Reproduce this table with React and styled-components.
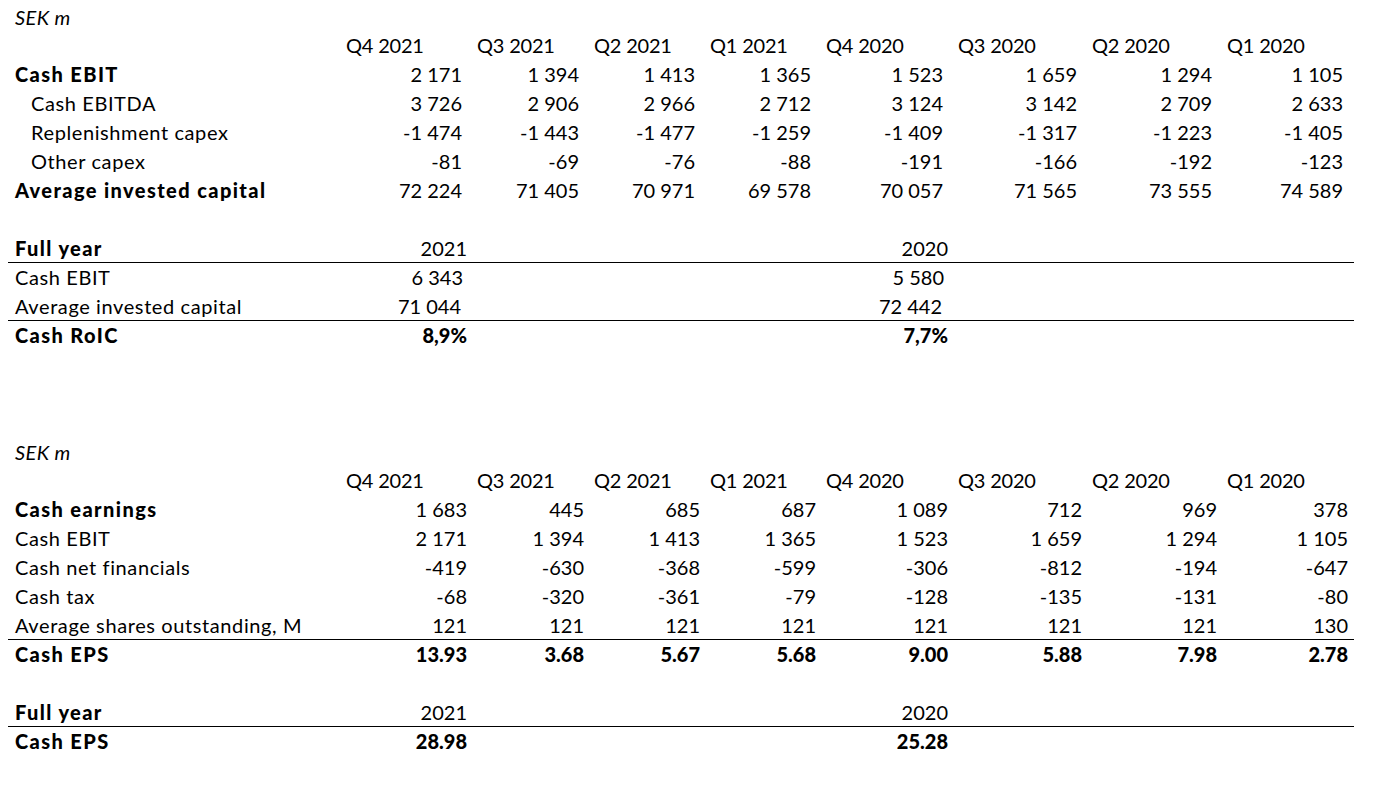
import React from "react";
import styled, { createGlobalStyle } from "styled-components";

const GlobalStyle = createGlobalStyle`
  body {
    margin: 0;
    background: #ffffff;
    color: #000000;
    font-family: Lato, "Open Sans", sans-serif;
  }
`;

const COLUMNS = "334px 131px 117px 116px 116px 132px 134px 135px 131px";

const quarters = [
  "Q4 2021",
  "Q3 2021",
  "Q2 2021",
  "Q1 2021",
  "Q4 2020",
  "Q3 2020",
  "Q2 2020",
  "Q1 2020",
];

const roicRows = [
  { label: "Cash EBIT", bold: true, values: ["2 171", "1 394", "1 413", "1 365", "1 523", "1 659", "1 294", "1 105"] },
  { label: "Cash EBITDA", indent: true, values: ["3 726", "2 906", "2 966", "2 712", "3 124", "3 142", "2 709", "2 633"] },
  { label: "Replenishment capex", indent: true, values: ["-1 474", "-1 443", "-1 477", "-1 259", "-1 409", "-1 317", "-1 223", "-1 405"] },
  { label: "Other capex", indent: true, values: ["-81", "-69", "-76", "-88", "-191", "-166", "-192", "-123"] },
  { label: "Average invested capital", bold: true, values: ["72 224", "71 405", "70 971", "69 578", "70 057", "71 565", "73 555", "74 589"] },
];

const epsRows = [
  { label: "Cash earnings", bold: true, values: ["1 683", "445", "685", "687", "1 089", "712", "969", "378"] },
  { label: "Cash EBIT", values: ["2 171", "1 394", "1 413", "1 365", "1 523", "1 659", "1 294", "1 105"] },
  { label: "Cash net financials", values: ["-419", "-630", "-368", "-599", "-306", "-812", "-194", "-647"] },
  { label: "Cash tax", values: ["-68", "-320", "-361", "-79", "-128", "-135", "-131", "-80"] },
  { label: "Average shares outstanding, M", rule: true, values: ["121", "121", "121", "121", "121", "121", "121", "130"] },
  { label: "Cash EPS", bold: true, boldValues: true, values: ["13.93", "3.68", "5.67", "5.68", "9.00", "5.88", "7.98", "2.78"] },
];

const Sheet = styled.div`
  padding: 2px 0 0 8px;
  width: 1346px;
`;

const Section = styled.section``;

const Row = styled.div`
  display: grid;
  grid-template-columns: ${COLUMNS};
  height: 29px;
  box-sizing: border-box;
  align-items: center;
  font-size: 20px;
  border-bottom: 1px solid ${(p) => (p.$rule ? "#000" : "transparent")};
`;

const Caption = styled.div`
  height: 29px;
  display: flex;
  align-items: center;
  padding-left: 7px;
  font-style: italic;
  font-size: 20px;
  letter-spacing: 0.4px;
`;

const Label = styled.div`
  padding-left: ${(p) => (p.$indent ? 23 : 7)}px;
  font-weight: ${(p) => (p.$bold ? 900 : 400)};
  letter-spacing: ${(p) => (p.$bold ? 1.4 : 0.6)}px;
  white-space: nowrap;
`;

const Head = styled.div`
  padding-left: 4px;
  white-space: nowrap;
  letter-spacing: -0.2px;
`;

const Value = styled.div`
  text-align: right;
  padding-right: ${(p) => p.$pad}px;
  font-weight: ${(p) => (p.$bold ? 900 : 400)};
  white-space: nowrap;
`;

const Empty = styled.div``;

function QuarterTable({ rows, pad }) {
  return (
    <>
      <Caption>SEK m</Caption>
      <Row>
        <Empty />
        {quarters.map((q) => (
          <Head key={q}>{q}</Head>
        ))}
      </Row>
      {rows.map((r) => (
        <Row key={r.label} $rule={r.rule}>
          <Label $bold={r.bold} $indent={r.indent}>
            {r.label}
          </Label>
          {r.values.map((v, i) => (
            <Value key={i} $pad={pad} $bold={r.boldValues}>
              {v}
            </Value>
          ))}
        </Row>
      ))}
    </>
  );
}

function YearRow({ label, a, b, bold, boldValues, rule, pad = 6 }) {
  return (
    <Row $rule={rule}>
      <Label $bold={bold}>{label}</Label>
      <Value $pad={pad} $bold={boldValues}>{a}</Value>
      <Empty />
      <Empty />
      <Empty />
      <Value $pad={pad} $bold={boldValues}>{b}</Value>
      <Empty />
      <Empty />
      <Empty />
    </Row>
  );
}

export default function App() {
  return (
    <>
      <GlobalStyle />
      <Sheet>
        <Section>
          <QuarterTable rows={roicRows} pad={11} />
          <Row />
          <YearRow bold rule label="Full year" a="2021" b="2020" />
          <YearRow pad={10} label="Cash EBIT" a="6 343" b="5 580" />
          <YearRow pad={12} rule label="Average invested capital" a="71 044" b="72 442" />
          <YearRow bold boldValues label="Cash RoIC" a="8,9%" b="7,7%" />
        </Section>
        <Section>
          <Row />
          <Row />
          <Row />
          <QuarterTable rows={epsRows} pad={6} />
          <Row />
          <YearRow bold rule label="Full year" a="2021" b="2020" />
          <YearRow bold boldValues label="Cash EPS" a="28.98" b="25.28" />
        </Section>
      </Sheet>
    </>
  );
}
